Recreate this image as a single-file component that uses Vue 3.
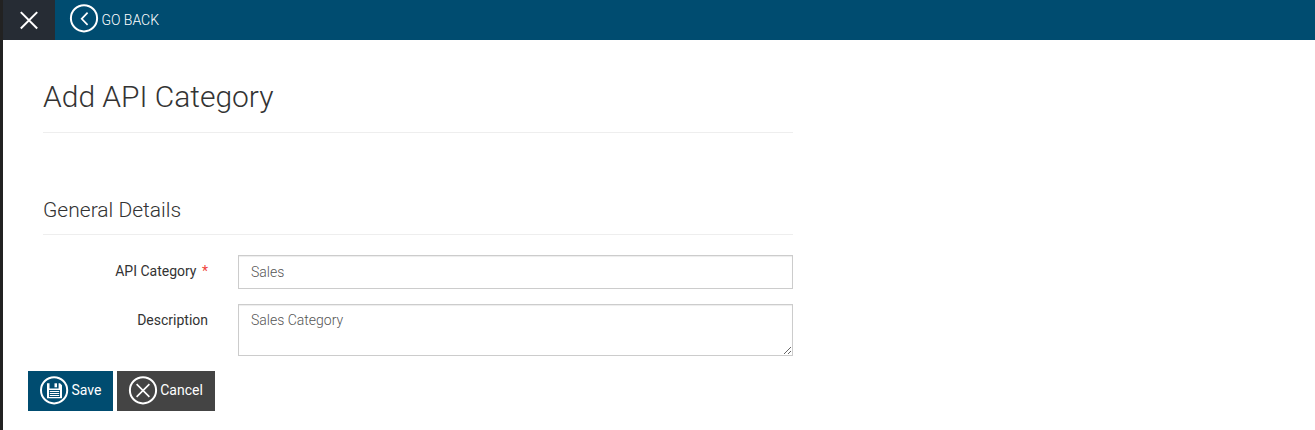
<script setup>
import { ref } from 'vue'
const category = ref('Sales')
const description = ref('Sales Category')
</script>

<template>
  <div class="page">
    <header class="bar">
      <button class="close" aria-label="Close">
        <svg width="20" height="20" viewBox="0 0 20 20"><path d="M1.8 2.1L18.2 18.5M18.2 2.1L1.8 18.5" /></svg>
      </button>
      <a class="back">
        <svg width="28" height="28" viewBox="0 0 28 28"><circle cx="14" cy="14.3" r="13.1" /><path class="chevron" d="M17.6 8.7L11.7 14.8L17.6 20.9" /></svg>
        <span>GO BACK</span>
      </a>
    </header>
    <main>
      <h1>Add API Category</h1>
      <form @submit.prevent>
        <h2>General Details</h2>
        <div class="row">
          <label for="category">API Category <span class="required">*</span></label>
          <input id="category" v-model="category" type="text" />
        </div>
        <div class="row">
          <label for="description">Description</label>
          <textarea id="description" v-model="description"></textarea>
        </div>
        <div class="actions">
          <button class="btn save">
            <svg width="28" height="28" viewBox="0 0 28 28">
              <circle cx="14.1" cy="14.3" r="13.1" />
              <path class="solid" fill-rule="evenodd" d="M7 7.3H9.5V12.5H18.6V7.3H20L22 9.3V22.3H7ZM9 14V21H20V14Z" />
              <path class="solid" d="M14.5 7.3H17V11.3H14.5Z" />
              <path class="lines" d="M9.8 15.5H19.2M9.8 17.5H19.2M9.8 19.5H19.2" />
            </svg>
            <span>Save</span>
          </button>
          <button class="btn cancel">
            <svg width="28" height="28" viewBox="0 0 28 28"><circle cx="14" cy="14.3" r="13.1" /><path d="M7.6 8.1L20.4 20.9M20.4 8.1L7.6 20.9" /></svg>
            <span>Cancel</span>
          </button>
        </div>
      </form>
    </main>
  </div>
</template>

<style>
body { background: #fff; overflow: hidden; }
</style>

<style scoped>
* { box-sizing: border-box; }
.page { height: 430px; border-left: 3px solid #222; font: 400 14px/20px Roboto, sans-serif; color: #333; }
.bar { display: flex; height: 40px; background: #004c70; }
button { border: 0; border-radius: 0; padding: 0; font: inherit; color: #fff; }
svg { display: block; flex: none; overflow: visible; fill: none; stroke: #fff; stroke-width: 2; }
.close { width: 52px; background: #262c34; display: flex; align-items: center; justify-content: center; }
.back { display: flex; align-items: center; gap: 3.4px; padding: 0 0 4px 15px; color: #fff; font-weight: 300; }
.back span { padding-top: 4px; }
.chevron { stroke-width: 1.7; }
main { width: 790px; padding-left: 40px; }
h1 { height: 93px; margin: 0; padding-top: 40px; border-bottom: 1px solid #eee; font-size: 30px; line-height: 33px; font-weight: 300; letter-spacing: -0.02px; }
h2 { height: 37px; margin: 65px 0 20px; padding-top: 1px; border-bottom: 1px solid #eee; font-size: 21px; line-height: 23px; font-weight: 300; }
.row { display: flex; gap: 30px; margin-bottom: 15px; }
label { width: 165px; padding-top: 6px; text-align: right; }
.required { color: #f0443c; margin-left: 2px; }
input, textarea { display: block; width: 555px; height: 34px; margin: 0; padding: 6px 12px; border: 1px solid #ccc; border-radius: 0; outline: 0; background: #fff; box-shadow: inset 0 1px 1px rgba(0, 0, 0, .075); color: #555; font: 300 14px/20px Roboto, sans-serif; }
textarea { height: 52px; padding-top: 5px; resize: vertical; }
.actions { display: flex; gap: 4px; margin-left: -15px; }
.btn { display: flex; align-items: center; justify-content: flex-start; height: 40px; padding: 0 0 2px 12px; gap: 3.5px; }
.save { width: 85px; background: #004c70; }
.cancel { width: 98px; padding-left: 11.7px; background: #444; }
.btn path { stroke-width: 1.6; }
.btn .solid { fill: #fff; stroke: none; }
.btn .lines { stroke-width: 1.2; }
</style>
